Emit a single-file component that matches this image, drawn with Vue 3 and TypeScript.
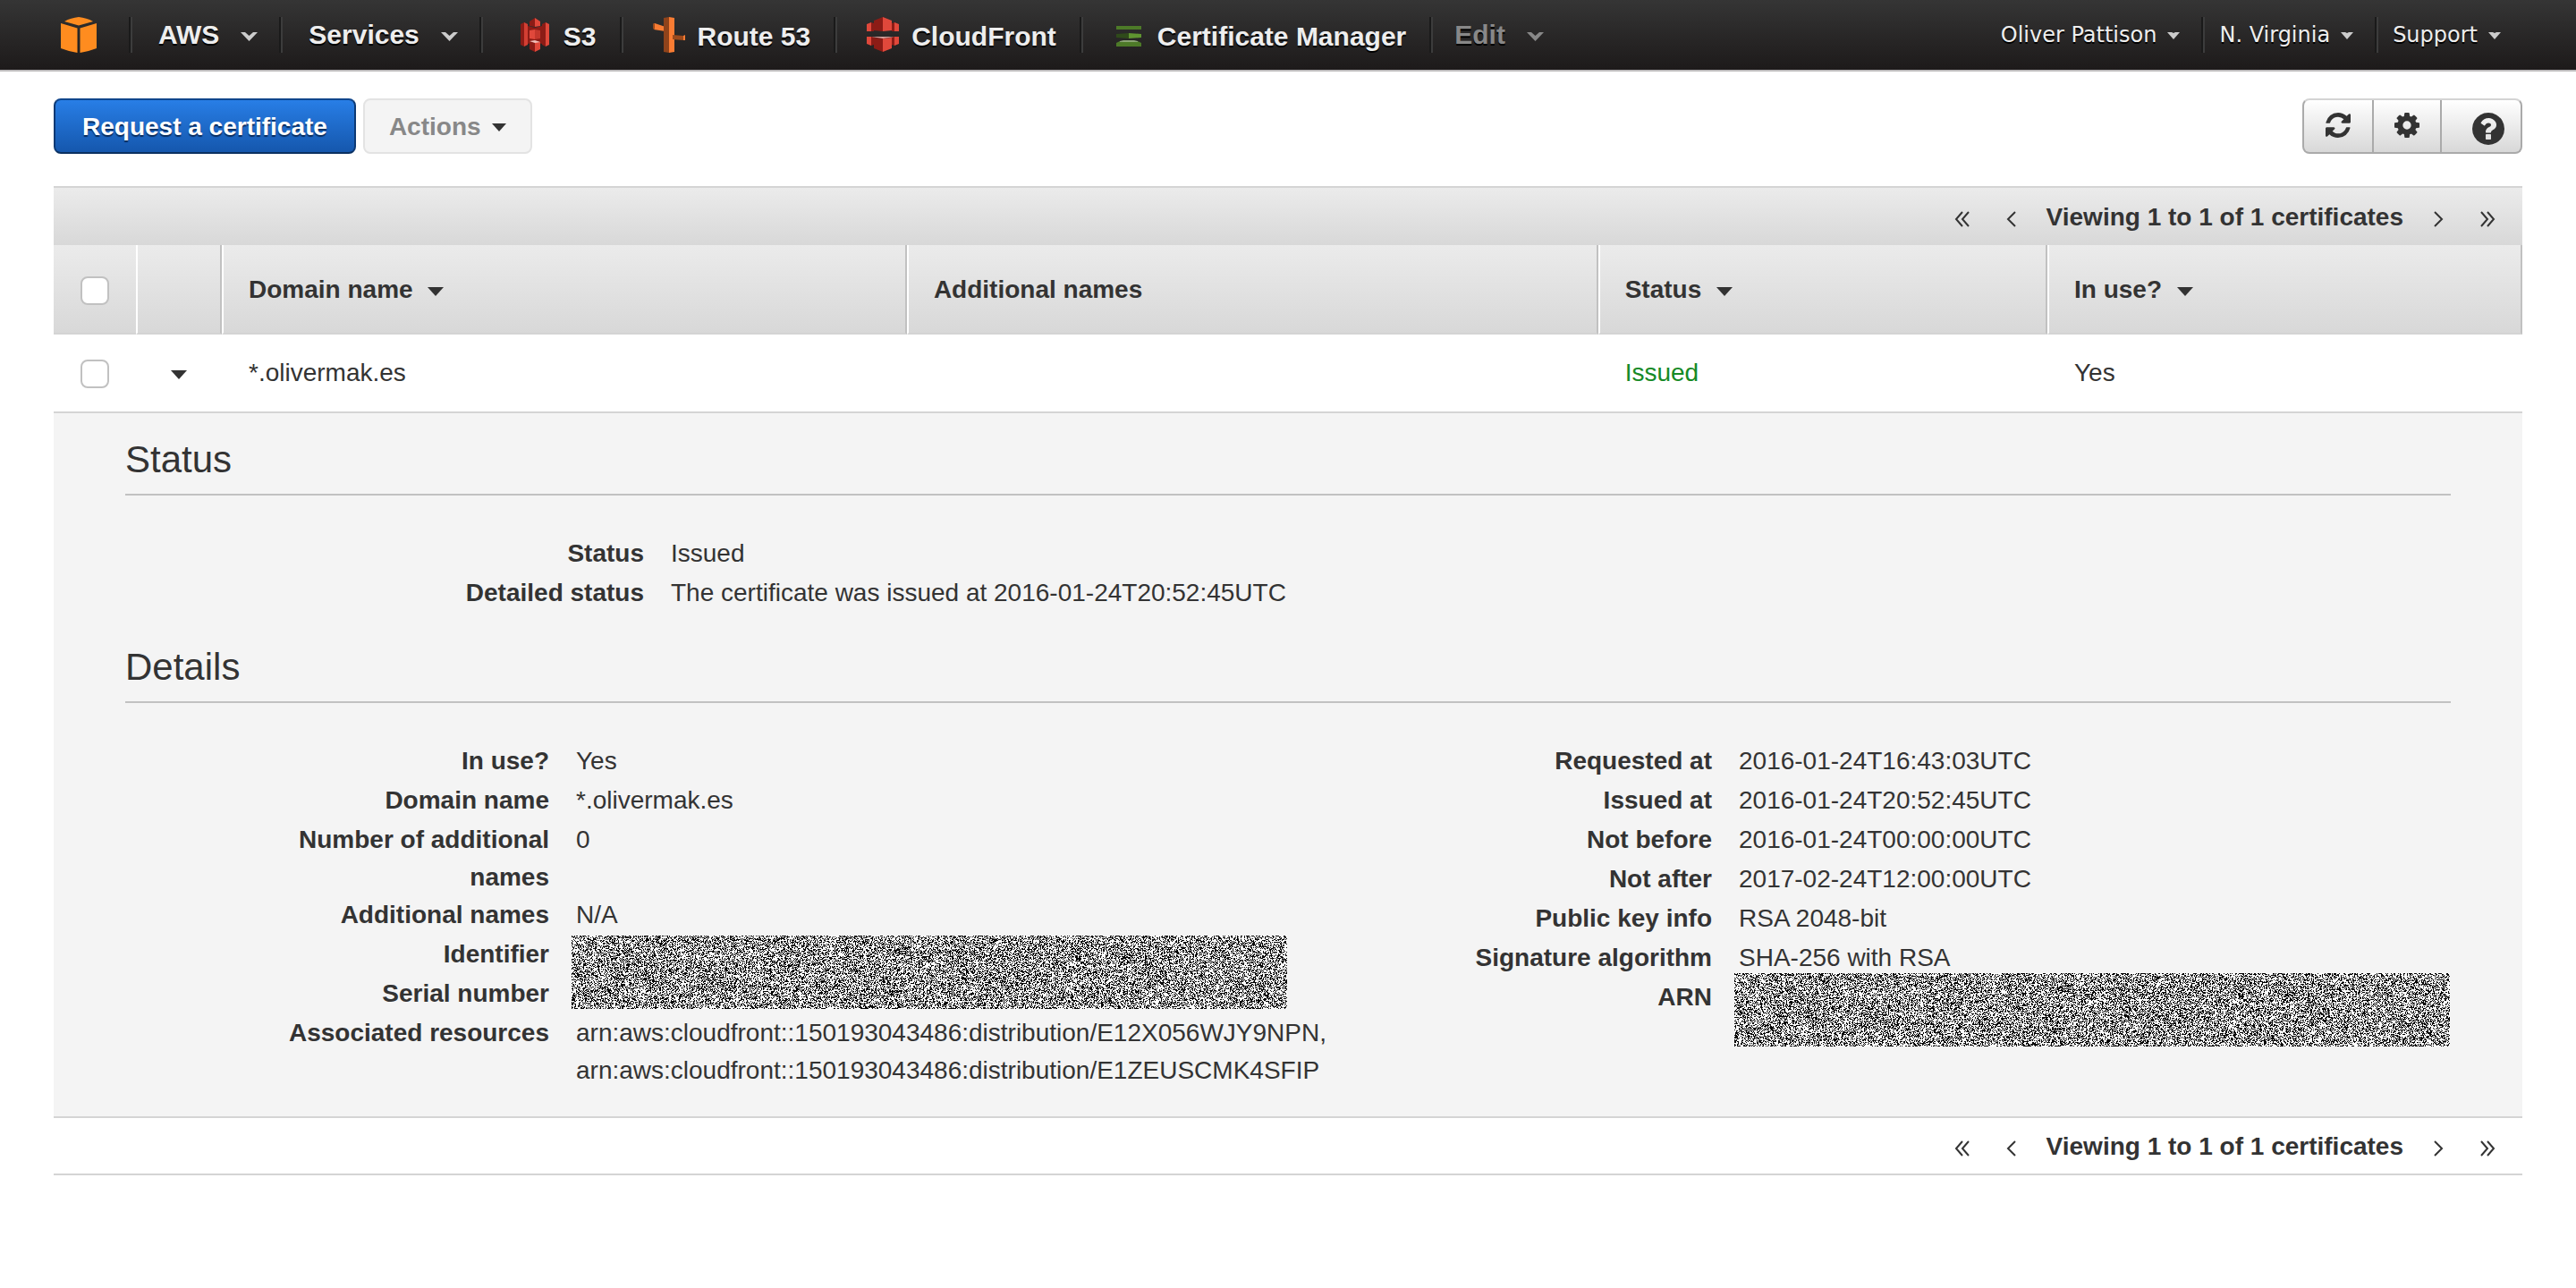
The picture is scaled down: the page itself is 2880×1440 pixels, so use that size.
<script setup lang="ts">
import { ref } from 'vue'

interface Field {
  label: string
  value: string[]
  redacted?: 'pair' | 'single'
}

const allSelected = ref(false)
const rowSelected = ref(false)

const shortcuts = [
  { name: 'S3', icon: 's3' },
  { name: 'Route 53', icon: 'route53' },
  { name: 'CloudFront', icon: 'cloudfront' },
  { name: 'Certificate Manager', icon: 'acm' },
]

const accountMenus = ['Oliver Pattison', 'N. Virginia', 'Support']

const statusFields: Field[] = [
  { label: 'Status', value: ['Issued'] },
  { label: 'Detailed status', value: ['The certificate was issued at 2016-01-24T20:52:45UTC'] },
]

const detailColumns: Field[][] = [
  [
    { label: 'In use?', value: ['Yes'] },
    { label: 'Domain name', value: ['*.olivermak.es'] },
    { label: 'Number of additional names', value: ['0'] },
    { label: 'Additional names', value: ['N/A'] },
    { label: 'Identifier', value: [], redacted: 'pair' },
    { label: 'Serial number', value: [] },
    {
      label: 'Associated resources',
      value: [
        'arn:aws:cloudfront::150193043486:distribution/E12X056WJY9NPN,',
        'arn:aws:cloudfront::150193043486:distribution/E1ZEUSCMK4SFIP',
      ],
    },
  ],
  [
    { label: 'Requested at', value: ['2016-01-24T16:43:03UTC'] },
    { label: 'Issued at', value: ['2016-01-24T20:52:45UTC'] },
    { label: 'Not before', value: ['2016-01-24T00:00:00UTC'] },
    { label: 'Not after', value: ['2017-02-24T12:00:00UTC'] },
    { label: 'Public key info', value: ['RSA 2048-bit'] },
    { label: 'Signature algorithm', value: ['SHA-256 with RSA'] },
    { label: 'ARN', value: [], redacted: 'single' },
  ],
]

// Fills a canvas with black and white static, used to hide private values.
const vNoise = {
  mounted(canvas: HTMLCanvasElement) {
    const ctx = canvas.getContext('2d')
    if (!ctx) return
    const image = ctx.createImageData(canvas.width, canvas.height)
    let seed = 20160124
    for (let i = 0; i < image.data.length; i += 4) {
      seed = (Math.imul(seed, 1664525) + 1013904223) >>> 0
      const tone = seed / 4294967296 < 0.42 ? 0 : 255
      image.data[i] = tone
      image.data[i + 1] = tone
      image.data[i + 2] = tone
      image.data[i + 3] = 255
    }
    ctx.putImageData(image, 0, 0)
  },
}
</script>

<template>
  <header class="nav">
    <nav class="nav-group" aria-label="Services">
      <a class="logo" href="#" aria-label="Console home">
        <svg width="40" height="40" viewBox="0 0 40 40" fill="#ff8c1f">
          <path d="M20 0C26 1 31 2 36 5L20 9.500 4 5C9 2 14 1 20 0z" />
          <path d="M0 7L18.500 12.500V40C12 39 6 37 0 35z" />
          <path d="M40 7L21.500 12.500V40C28 39 34 37 40 35z" />
        </svg>
      </a>
      <button class="nav-item menu" type="button">
        AWS
        <svg class="arrow" width="19" height="10" viewBox="0 0 19 10"><path d="M0 0H5L9.500 4 14 0H19L9.500 10z" /></svg>
      </button>
      <button class="nav-item menu" type="button">
        Services
        <svg class="arrow" width="19" height="10" viewBox="0 0 19 10"><path d="M0 0H5L9.500 4 14 0H19L9.500 10z" /></svg>
      </button>
      <a v-for="s in shortcuts" :key="s.name" class="nav-item shortcut" href="#">
        <svg v-if="s.icon === 's3'" width="40" height="40" viewBox="0 0 40 40">
          <path d="M4 8L8 6V33L4 31z" fill="#8c1c16" />
          <path d="M8 6L12 8V31L8 33z" fill="#d33f33" />
          <path d="M32 6L28 8V31L32 33z" fill="#8c1c16" />
          <path d="M32 6L36 8V31L32 33z" fill="#e0483b" />
          <path d="M12 10L20 12V28L12 30z" fill="#8c1c16" />
          <path d="M28 10L20 12V28L28 30z" fill="#8c1c16" />
          <path d="M14 5L20 1V11L14 10z" fill="#8c1c16" />
          <path d="M26 5L20 1V11L26 10z" fill="#e0483b" />
          <path d="M14 15L20 14V25L14 24z" fill="#e0483b" />
          <path d="M26 15L20 14V25L26 24z" fill="#c4372c" />
          <path d="M14 28L20 27V39L14 36z" fill="#8c1c16" />
          <path d="M26 28L20 27V39L26 36z" fill="#e0483b" />
          <path d="M14 27L20 26L26 28L20 29z" fill="#f3c0ba" />
        </svg>
        <svg v-else-if="s.icon === 'route53'" width="40" height="40" viewBox="0 0 40 40">
          <path d="M2 8L4 7L16 11V16L3 14z" fill="#f97c33" />
          <path d="M2 8L4 7V14L2 13z" fill="#9c4a1c" />
          <path d="M14 1L20 0V40L14 39z" fill="#8f431b" />
          <path d="M20 0L26 1V39L20 40z" fill="#f97c33" />
          <path d="M24 20L36 21V26L24 25z" fill="#9c4a1c" />
          <path d="M36 21L38 20V26L36 26z" fill="#f97c33" />
        </svg>
        <svg v-else-if="s.icon === 'cloudfront'" width="40" height="40" viewBox="0 0 40 40">
          <path d="M2 8L7 6V16H2z" fill="#e0483b" />
          <path d="M7 6L10 7V16H7z" fill="#8c1c16" />
          <path d="M38 8L33 6V16H38z" fill="#e0483b" />
          <path d="M33 6L30 7V16H33z" fill="#8c1c16" />
          <path d="M10 4L20 0V16L10 15z" fill="#8c1c16" />
          <path d="M30 4L20 0V16L30 15z" fill="#e0483b" />
          <path d="M2 22H7V32L2 30z" fill="#e0483b" />
          <path d="M7 22H10V31L7 32z" fill="#8c1c16" />
          <path d="M38 22H33V32L38 30z" fill="#e0483b" />
          <path d="M33 22H30V31L33 32z" fill="#8c1c16" />
          <path d="M10 23L20 24V39L10 35z" fill="#8c1c16" />
          <path d="M30 23L20 24V39L30 35z" fill="#e0483b" />
          <path d="M7 22H33L20 24z" fill="#d9a09b" />
        </svg>
        <svg v-else width="40" height="40" viewBox="0 0 40 40">
          <path d="M6 10H34V14H6z" fill="#4d7a28" />
          <path d="M6 19L20 18V24L6 23z" fill="#2f4a1a" />
          <path d="M20 18L34 19V23L20 24z" fill="#5f9430" />
          <path d="M10 27H30L34 29V33H6V29z" fill="#4d7a28" />
          <path d="M10 27L14 26H26L30 27V28H10z" fill="#8aa374" />
        </svg>
        <span class="name">{{ s.name }}</span>
      </a>
      <button class="nav-item menu edit" type="button">
        Edit
        <svg class="arrow" width="19" height="10" viewBox="0 0 19 10"><path d="M0 0H5L9.500 4 14 0H19L9.500 10z" /></svg>
      </button>
    </nav>
    <nav class="nav-group" aria-label="Account">
      <button v-for="m in accountMenus" :key="m" class="nav-item account" type="button">
        {{ m }}
        <svg class="arrow" width="14" height="8" viewBox="0 0 14 8"><path d="M0 0H5L7 1 9 0H14L7 8z" /></svg>
      </button>
    </nav>
  </header>

  <main class="page">
    <div class="toolbar">
      <button class="btn primary" type="button">Request a certificate</button>
      <button class="btn actions" type="button" disabled>
        Actions
        <svg width="16" height="9" viewBox="0 0 16 9" fill="#333"><path d="M0 0H16L8 9z" /></svg>
      </button>
      <div class="tools">
        <button type="button" aria-label="Refresh">
          <svg width="28" height="28" viewBox="0 0 1536 1536"><path d="M1511 928q0 5-1 7-64 268-268 434.500t-478 166.500q-146 0-282.500-55t-243.500-157l-129 129q-19 19-45 19t-45-19-19-45v-448q0-26 19-45t45-19h448q26 0 45 19t19 45-19 45l-137 137q71 66 161 102t187 36q134 0 250-65t186-179q11-17 53-117 8-23 30-23h192q13 0 22.500 9.500t9.500 22.500zm25-800v448q0 26-19 45t-45 19h-448q-26 0-45-19t-19-45 19-45l138-138q-148-137-349-137-134 0-250 65t-186 179q-11 17-53 117-8 23-30 23h-199q-13 0-22.500-9.500t-9.500-22.500v-7q65-268 270-434.500t480-166.500q146 0 284 55.500t245 156.500l130-129q19-19 45-19t45 19 19 45z" /></svg>
        </button>
        <button type="button" aria-label="Settings">
          <svg width="28" height="28" viewBox="0 0 1536 1536"><path d="M1024 768q0-106-75-181t-181-75-181 75-75 181 75 181 181 75 181-75 75-181zm512-109v222q0 12-8 23t-20 13l-185 28q-19 54-39 91 35 50 107 138 10 12 10 25t-9 23q-27 37-99 108t-94 71q-12 0-26-9l-138-108q-44 23-91 38-16 136-29 186-7 28-36 28h-222q-14 0-24.500-8.500t-11.500-21.500l-28-184q-49-16-90-37l-141 107q-10 9-25 9-14 0-25-11-126-114-165-168-7-10-7-23 0-12 8-23 15-21 51-66.500t54-70.500q-27-50-41-99l-183-27q-13-2-21-12.500t-8-23.500v-222q0-12 8-23t19-13l186-28q14-46 39-92-40-57-107-138-10-12-10-24 0-10 9-23 26-36 98.500-107.500t94.500-71.500q13 0 26 10l138 107q44-23 91-38 16-136 29-186 7-28 36-28h222q14 0 24.500 8.500t11.500 21.500l28 184q49 16 90 37l142-107q9-9 24-9 13 0 25 10 129 119 165 170 7 8 7 22 0 12-8 23-15 21-51 66.500t-54 70.500q26 50 41 98l183 28q13 2 21 12.500t8 23.500z" /></svg>
        </button>
        <button class="help" type="button" aria-label="Help">
          <svg width="36" height="36" viewBox="0 0 1536 1536"><path d="M896 1248v-192q0-14-9-23t-23-9h-192q-14 0-23 9t-9 23v192q0 14 9 23t23 9h192q14 0 23-9t9-23zm256-672q0-88-55.500-163t-138.500-116-170-41q-243 0-371 213-15 24 8 42l132 100q7 6 19 6 16 0 25-12 53-68 86-92 34-24 86-24 48 0 85.500 26t37.500 59q0 38-20 61t-68 45q-63 28-115.500 86.500t-52.500 125.500v36q0 14 9 23t23 9h192q14 0 23-9t9-23q0-19 21.500-49.500t54.500-49.500q32-18 49-28.500t46-35 44.500-48 28-60.500 12.500-81zm384 192q0 209-103 385.500t-279.500 279.500-385.500 103-385.500-103-279.500-279.500-103-385.500 103-385.500 279.500-279.500 385.500-103 385.500 103 279.500 279.500 103 385.500z" /></svg>
        </button>
      </div>
    </div>

    <div class="pager pager-top">
      <button type="button" aria-label="First page"><svg width="18" height="18" viewBox="0 0 18 18"><path d="M9 1L2 9L9 17M16 1L9 9L16 17" /></svg></button>
      <button type="button" aria-label="Previous page"><svg width="12" height="18" viewBox="0 0 12 18"><path d="M10 1L2 9L10 17" /></svg></button>
      <span class="count">Viewing 1 to 1 of 1 certificates</span>
      <button type="button" aria-label="Next page"><svg width="12" height="18" viewBox="0 0 12 18"><path d="M2 1L10 9L2 17" /></svg></button>
      <button type="button" aria-label="Last page"><svg width="18" height="18" viewBox="0 0 18 18"><path d="M2 1L9 9L2 17M9 1L16 9L9 17" /></svg></button>
    </div>

    <table class="grid">
      <colgroup>
        <col class="c-check" />
        <col class="c-toggle" />
        <col class="c-domain" />
        <col class="c-names" />
        <col class="c-status" />
        <col />
      </colgroup>
      <thead>
        <tr>
          <th class="check first"><input v-model="allSelected" type="checkbox" aria-label="Select all certificates" /></th>
          <th aria-label="Expand"></th>
          <th scope="col">Domain name <svg class="sort" width="18" height="10" viewBox="0 0 18 10"><path d="M0 0H18L9 10z" /></svg></th>
          <th scope="col">Additional names</th>
          <th scope="col">Status <svg class="sort" width="18" height="10" viewBox="0 0 18 10"><path d="M0 0H18L9 10z" /></svg></th>
          <th scope="col">In use? <svg class="sort" width="18" height="10" viewBox="0 0 18 10"><path d="M0 0H18L9 10z" /></svg></th>
        </tr>
      </thead>
      <tbody>
        <tr class="row">
          <td class="check"><input v-model="rowSelected" type="checkbox" aria-label="Select *.olivermak.es" /></td>
          <td class="toggle">
            <button type="button" aria-label="Collapse details"><svg width="18" height="10" viewBox="0 0 18 10"><path d="M0 0H18L9 10z" /></svg></button>
          </td>
          <td>*.olivermak.es</td>
          <td></td>
          <td class="issued">Issued</td>
          <td>Yes</td>
        </tr>
        <tr>
          <td class="detail" colspan="6">
            <h2>Status</h2>
            <dl class="fields wide">
              <template v-for="f in statusFields" :key="f.label">
                <dt>{{ f.label }}</dt>
                <dd><div v-for="v in f.value" :key="v">{{ v }}</div></dd>
              </template>
            </dl>
            <h2>Details</h2>
            <div class="columns">
              <dl v-for="(fields, i) in detailColumns" :key="i" class="fields">
                <template v-for="f in fields" :key="f.label">
                  <dt>{{ f.label }}</dt>
                  <dd>
                    <div v-for="v in f.value" :key="v">{{ v }}</div>
                    <canvas v-if="f.redacted" v-noise class="noise" :class="f.redacted" width="800" height="82"></canvas>
                  </dd>
                </template>
              </dl>
            </div>
          </td>
        </tr>
      </tbody>
    </table>

    <div class="pager pager-bottom">
      <button type="button" aria-label="First page"><svg width="18" height="18" viewBox="0 0 18 18"><path d="M9 1L2 9L9 17M16 1L9 9L16 17" /></svg></button>
      <button type="button" aria-label="Previous page"><svg width="12" height="18" viewBox="0 0 12 18"><path d="M10 1L2 9L10 17" /></svg></button>
      <span class="count">Viewing 1 to 1 of 1 certificates</span>
      <button type="button" aria-label="Next page"><svg width="12" height="18" viewBox="0 0 12 18"><path d="M2 1L10 9L2 17" /></svg></button>
      <button type="button" aria-label="Last page"><svg width="18" height="18" viewBox="0 0 18 18"><path d="M2 1L9 9L2 17M9 1L16 9L9 17" /></svg></button>
    </div>
  </main>
</template>

<style>
body {
  background: #fff;
  color: #333;
  font: 28px/42px "Liberation Sans", Arial, sans-serif;
}

button {
  font: inherit;
  color: inherit;
  margin: 0;
  padding: 0;
  border: 0;
  background: none;
}
</style>

<style scoped>
svg {
  display: block;
  flex: none;
}

.nav {
  display: flex;
  justify-content: space-between;
  height: 78px;
  padding: 0 60px 0 68px;
  border-bottom: 2px solid #bdbbbc;
  background: linear-gradient(#353535, #1d1a1a);
}

.nav-group {
  display: flex;
  align-items: center;
}

.logo {
  margin-right: 36px;
}

.nav-item {
  display: flex;
  align-items: center;
  height: 40px;
  color: #eee;
  font-size: 30px;
  font-weight: bold;
  line-height: 40px;
  text-decoration: none;
  text-shadow: 0 2px 0 #000;
  white-space: nowrap;
}

.nav-item::before {
  content: "";
  width: 2px;
  height: 40px;
  background: #1a1a1a;
  border-right: 2px solid #3c3c3c;
}

.menu::before {
  margin-right: 29px;
}

.menu .arrow {
  margin: 4px 24px 0;
}

.arrow {
  fill: #ccc;
}

.shortcut {
  gap: 12px;
  padding-right: 26px;
}

.shortcut::before {
  margin-right: 19px;
}

.menu + .shortcut::before {
  margin-right: 26px;
}

.name {
  padding-top: 4px;
}

.edit {
  color: #888;
}

.edit::before {
  margin-right: 24px;
}

.edit .arrow {
  fill: #888;
}

.account {
  font-family: "DejaVu Sans", Verdana, sans-serif;
  font-size: 24px;
  font-weight: normal;
}

.account::before {
  margin-right: 16px;
}

.account:first-child::before {
  display: none;
}

.account .arrow {
  margin: 2px 24px 0 12px;
}

.page {
  padding: 30px 60px;
}

.toolbar {
  display: flex;
  gap: 8px;
  margin-bottom: 36px;
}

.btn {
  display: flex;
  align-items: center;
  height: 62px;
  box-sizing: border-box;
  border: 2px solid;
  border-radius: 8px;
  font-weight: bold;
}

.primary {
  padding: 2px 30px 0;
  border-color: #0f458c #0c3974 #0a3060;
  background: linear-gradient(#287ee6, #1557ad);
  color: #fff;
  text-shadow: 0 2px 1px #0a2c5c;
}

.actions {
  gap: 12px;
  padding: 2px 27px 0;
  border-color: #e3e3e3;
  background: #f4f4f4;
  color: #888;
}

.tools {
  display: flex;
  height: 62px;
  box-sizing: border-box;
  margin-left: auto;
  border: 2px solid #aaa;
  border-top-color: #d4d4d4;
  border-radius: 8px;
  background: linear-gradient(#fff, #d8d8d8);
}

.tools button {
  display: flex;
  align-items: center;
  justify-content: center;
  width: 76px;
  padding-bottom: 2px;
  fill: #333;
}

.tools button + button {
  border-left: 2px solid #aaa;
}

.tools .help {
  width: 90px;
  padding: 6px 0 0 16px;
}

.pager {
  display: flex;
  align-items: center;
  justify-content: flex-end;
  gap: 40px;
  padding: 0 30px;
  font-weight: bold;
}

.pager-top {
  height: 64px;
  border-top: 2px solid #d4d4d4;
  background: linear-gradient(#ebebeb, #d8d8d8);
}

.pager-bottom {
  height: 62px;
  border-bottom: 2px solid #d4d4d4;
}

.pager button {
  padding-top: 6px;
}

.pager path {
  fill: none;
  stroke: #333;
  stroke-width: 2;
}

.count {
  margin: 0 -7px;
  padding-top: 2px;
}

.grid {
  width: 100%;
  border-collapse: separate;
  border-spacing: 0;
  table-layout: fixed;
}

.c-check {
  width: 92px;
}

.c-toggle {
  width: 96px;
}

.c-domain {
  width: 27.75%;
}

.c-names {
  width: 28%;
}

.c-status {
  width: 18.2%;
}

th {
  height: 96px;
  padding: 2px 28px 0;
  border-bottom: 2px solid #d4d4d4;
  border-left: 2px solid #fff;
  border-right: 2px solid #c1c1c1;
  background: linear-gradient(#ebebeb, #d8d8d8);
  text-align: left;
}

th.first {
  border-left: 0;
  border-right: 0;
}

.sort {
  display: inline-block;
  margin: 0 0 2px 9px;
  fill: #333;
}

td {
  padding: 0 30px;
}

.row td {
  height: 86px;
}

.check {
  padding: 2px 0 0 30px;
}

.check input {
  display: block;
  appearance: none;
  width: 32px;
  height: 32px;
  margin: 2px 0 0;
  border: 2px solid #c1c1c1;
  border-radius: 8px;
  background: #fff;
}

.row .check {
  height: 84px;
  padding-top: 0;
}

.toggle {
  padding: 0 0 0 39px;
}

.toggle button {
  display: block;
  padding-top: 4px;
  fill: #333;
}

.issued {
  color: #168a26;
}

.detail {
  padding: 22px 80px 30px;
  border-top: 2px solid #d4d4d4;
  border-bottom: 2px solid #d4d4d4;
  background: #f4f4f4;
}

h2 {
  margin: 0 0 44px;
  padding-bottom: 8px;
  border-bottom: 2px solid #c1c1c1;
  font-size: 42px;
  font-weight: normal;
  line-height: 60px;
}

.columns {
  display: grid;
  grid-template-columns: 1fr 1fr;
}

.fields {
  display: grid;
  grid-template-columns: 324px minmax(0, 1fr);
  grid-auto-rows: minmax(44px, auto);
  align-content: start;
  column-gap: 30px;
  margin: 0;
  padding-left: 150px;
}

.wide {
  grid-template-columns: 430px minmax(0, 1fr);
  margin-bottom: 30px;
}

dt {
  font-weight: bold;
  text-align: right;
}

dd {
  position: relative;
  margin: 0;
}

.noise {
  position: absolute;
  left: -5px;
  z-index: 1;
  width: 800px;
  height: 82px;
}

.pair {
  top: 0;
}

.single {
  top: -6px;
}
</style>
